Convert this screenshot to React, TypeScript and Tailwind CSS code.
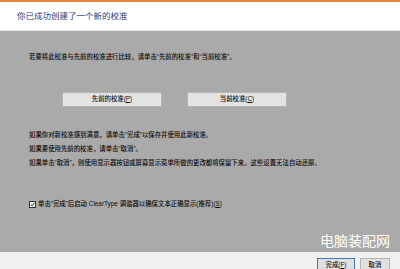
import React from "react";

export default function App() {
  const font = { fontFamily: '"Liberation Sans", "Noto Sans CJK SC", sans-serif' };
  return (
    <div
      className="w-[400px] h-[269px] flex flex-col overflow-hidden relative bg-[#aaaaaa]"
      style={font}
    >
      <div className="h-[2px] bg-[#e8823f] shrink-0" />
      <div className="h-[29px] bg-white shrink-0 flex items-center pl-[17px] border-b border-[#e9e9e9]">
        <span className="text-[8.5px] text-[#23407e] leading-none">你已成功创建了一个新的校准</span>
      </div>
      <div className="flex-1 flex flex-col pl-[29px] text-[#0a0a0a] text-[6.4px] font-medium">
        <div className="pt-[21px] leading-[10px]">
          若要将此校准与先前的校准进行比较，请单击“先前的校准”和“当前校准”。
        </div>
        <div className="flex mt-[30px] ml-[33px] gap-[25px]">
          <div className="w-[100px] h-[15px] bg-[#e3e3e3] border border-[#b4b4b4] flex items-center justify-center leading-none">
            先前的校准(<span className="underline">P</span>)
          </div>
          <div className="w-[100px] h-[15px] bg-[#e3e3e3] border border-[#b4b4b4] flex items-center justify-center leading-none">
            当前校准(<span className="underline">C</span>)
          </div>
        </div>
        <div className="mt-[21px] leading-[14px]">
          <div>如果你对新校准感到满意，请单击“完成”以保存并使用此新校准。</div>
          <div>如果要使用先前的校准，请单击“取消”。</div>
          <div>如果单击“取消”，则使用显示器按钮或屏幕显示菜单所做的更改都将保留下来。这些设置无法自动还原。</div>
        </div>
        <div className="mt-[29px] h-[10px] flex items-center gap-[2px] leading-none">
          <div className="w-[7px] h-[7px] border border-[#333] bg-[#f4f4f4] flex items-center justify-center">
            <svg width="5" height="5" viewBox="0 0 5 5">
              <path d="M0.6 2.6 L2 3.9 L4.4 0.9" stroke="#222" strokeWidth="0.9" fill="none" />
            </svg>
          </div>
          <span>
            单击“完成”后启动 ClearType 调谐器以确保文本正确显示(推荐)(<span className="underline">S</span>)
          </span>
        </div>
      </div>
      <div className="h-[17px] bg-[#f0f0f0] shrink-0 flex items-start pt-[6px] pl-[317px] gap-[5px] text-[6.4px] text-[#0a0a0a] font-medium">
        <div className="w-[38px] h-[14px] bg-[#e1e1e1] border border-[#3d7ab8] flex items-center justify-center leading-none">
          完成(<span className="underline">F</span>)
        </div>
        <div className="w-[30px] h-[14px] bg-[#e1e1e1] border border-[#b4b4b4] flex items-center justify-center leading-none">
          取消
        </div>
      </div>
      <div
        className="absolute left-[320px] top-[231px] text-[14px] leading-[18px] text-white"
        style={{ fontFamily: '"Noto Sans CJK SC", sans-serif' }}
      >
        电脑装配网
      </div>
    </div>
  );
}
